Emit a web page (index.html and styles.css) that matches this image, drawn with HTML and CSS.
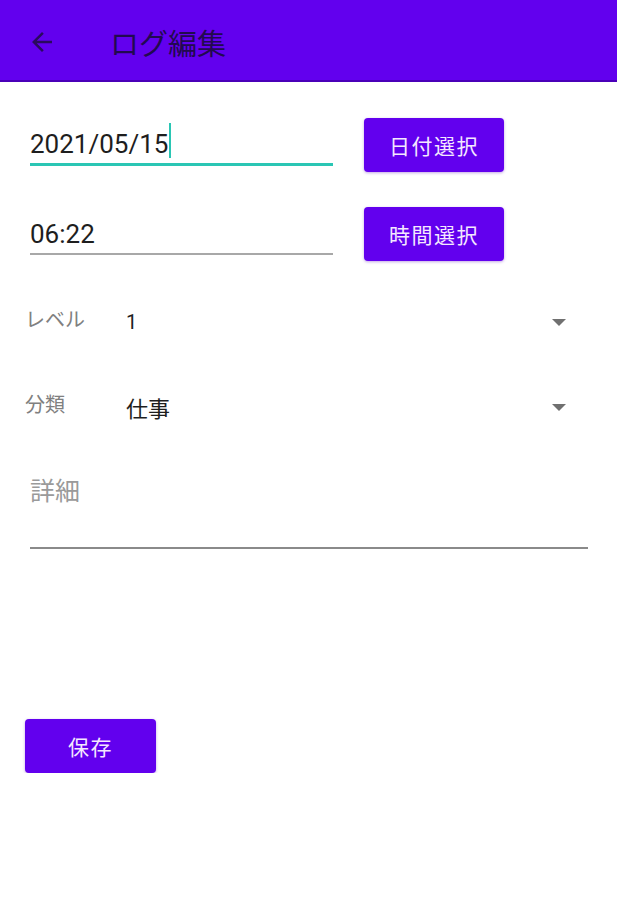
FILE: index.html
```html
<!DOCTYPE html>
<html>
<head>
    <title>ログ編集</title>
    <link rel="stylesheet" href="styles.css">
</head>
<body>
    <div class="app-bar">
        <svg class="back" width="30" height="30" viewBox="0 0 24 24">
            <path d="M20 11H7.83l5.59-5.59L12 4l-8 8 8 8 1.41-1.41L7.83 13H20v-2z" fill="#2a0a5e"/>
        </svg>
        <div class="title">ログ編集</div>
    </div>

    <div class="content">
        <div class="field-row first">
            <div class="text-field focused">
                <span class="value">2021/05/15</span><span class="cursor"></span>
            </div>
            <button class="btn">日付選択</button>
        </div>
        <div class="field-row">
            <div class="text-field">
                <span class="value">06:22</span>
            </div>
            <button class="btn">時間選択</button>
        </div>

        <div class="spinner-row level">
            <div class="label">レベル</div>
            <div class="spinner-value">1</div>
            <div class="arrow"></div>
        </div>
        <div class="spinner-row category">
            <div class="label">分類</div>
            <div class="spinner-value">仕事</div>
            <div class="arrow"></div>
        </div>

        <div class="detail">
            <div class="hint">詳細</div>
        </div>

        <button class="btn save">保存</button>
    </div>
</body>
</html>
```

FILE: styles.css
```css
body {
    margin: 0;
    background: #ffffff;
    font-family: Roboto, "Noto Sans CJK JP", sans-serif;
}

.app-bar {
    height: 80px;
    background: #6200ee;
    border-bottom: 2px solid #4a00b8;
    display: flex;
    align-items: center;
}

.app-bar .back {
    margin-left: 27px;
    margin-top: 4px;
}

.app-bar .title {
    margin-left: 53px;
    margin-top: 4px;
    font-size: 29px;
    color: #220a50;
}

.content {
    padding: 0 29px 0 30px;
}

.field-row {
    display: flex;
    align-items: flex-start;
    margin-top: 35px;
}

.field-row.first {
    margin-top: 36px;
}

.text-field {
    width: 303px;
    height: 44px;
    border-bottom: 2px solid #a8a8a8;
    display: flex;
    align-items: flex-end;
    margin-top: 2px;
}

.text-field.focused {
    border-bottom: 3px solid #2ac6b4;
    height: 43px;
}

.text-field .value {
    font-size: 26px;
    color: #1e1e1e;
    line-height: 36px;
    padding-bottom: 1px;
}

.text-field .cursor {
    width: 2px;
    height: 35px;
    background: #2ac6b4;
    margin-left: 1px;
    margin-bottom: 5px;
}

.btn {
    background: #6200ee;
    color: #f4e8ff;
    border: none;
    border-radius: 4px;
    font-family: Roboto, "Noto Sans CJK JP", sans-serif;
    font-size: 21px;
    letter-spacing: 1.5px;
    box-shadow: 0 1px 3px rgba(80, 0, 180, 0.35);
}

.field-row .btn {
    width: 140px;
    height: 54px;
    margin-left: 31px;
}

.spinner-row {
    display: flex;
    align-items: center;
    height: 40px;
}

.spinner-row.level {
    margin-top: 41px;
}

.spinner-row.category {
    margin-top: 45px;
}

.spinner-row .label {
    width: 101px;
    margin-left: -5px;
    margin-top: -8px;
    font-size: 20px;
    color: #808080;
}

.spinner-row .spinner-value {
    flex: 1;
    font-size: 20px;
    color: #1e1e1e;
}

.spinner-row.category .spinner-value {
    font-size: 22px;
}

.spinner-row .arrow {
    width: 0;
    height: 0;
    border-left: 7px solid transparent;
    border-right: 7px solid transparent;
    border-top: 7px solid #707070;
    margin-right: 22px;
}

.detail {
    margin-top: 44px;
    width: 558px;
    height: 76px;
    border-bottom: 2px solid #8a8a8a;
}

.detail .hint {
    font-size: 25px;
    color: #9a9a9a;
}

.btn.save {
    width: 131px;
    height: 54px;
    margin-left: -5px;
    margin-top: 170px;
    font-size: 21px;
}
```
